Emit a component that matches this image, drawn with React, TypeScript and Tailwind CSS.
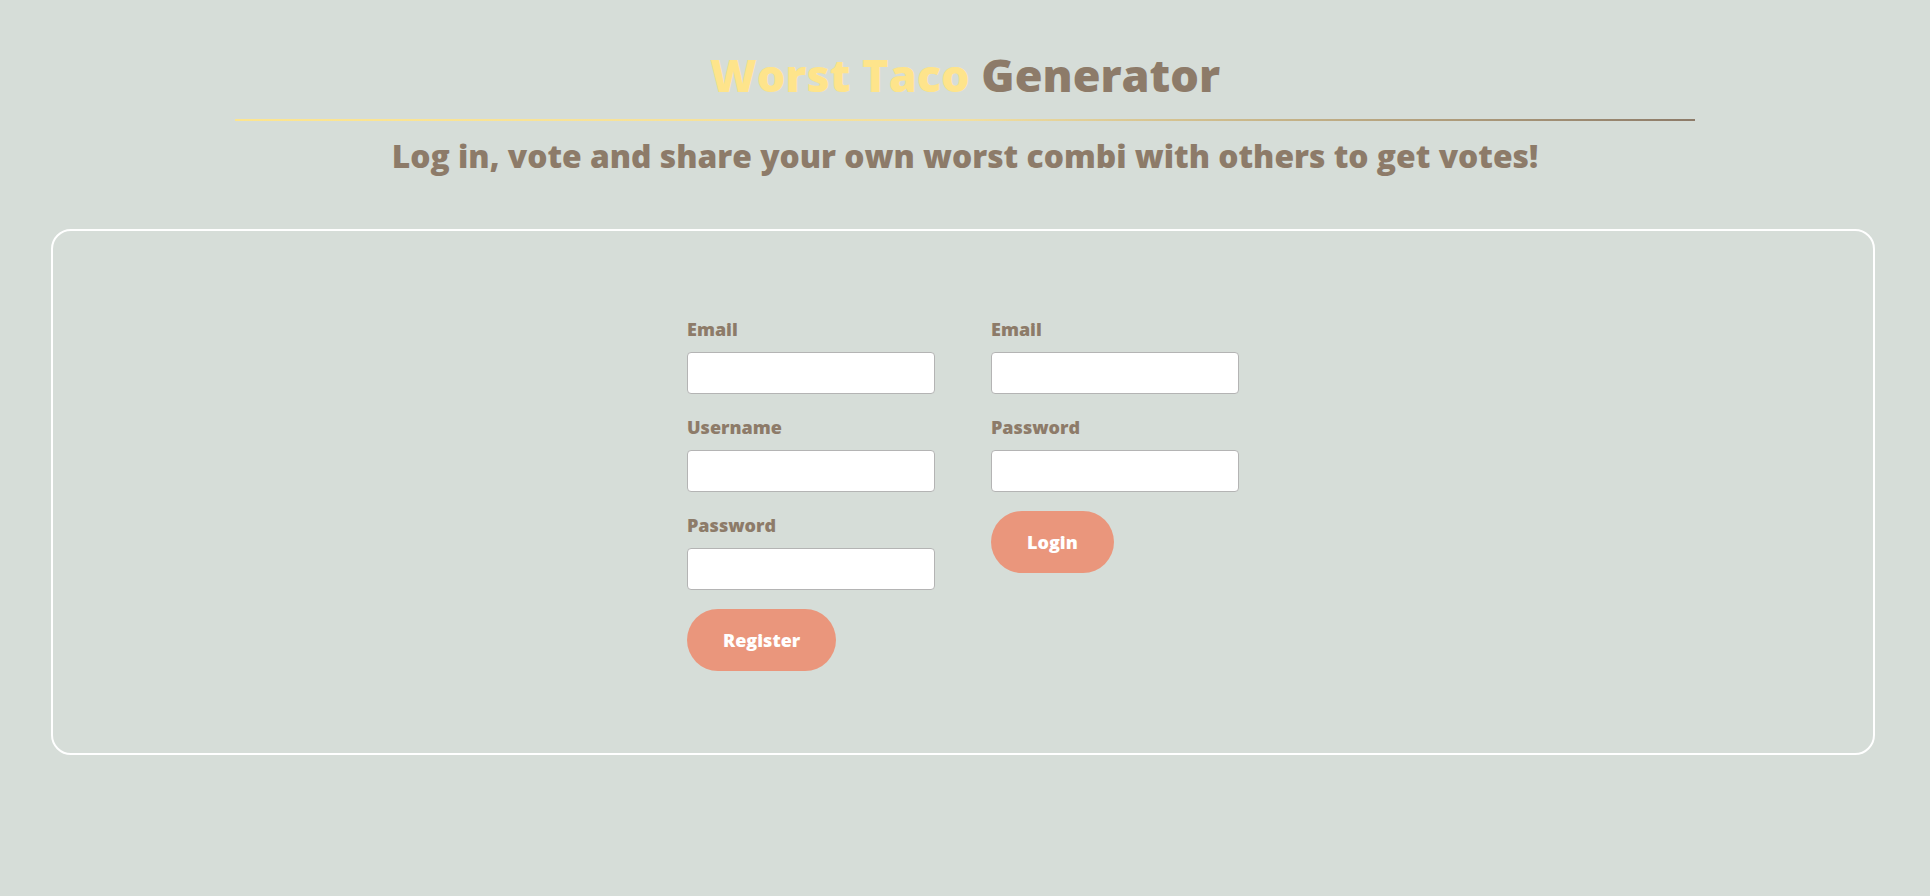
import React from "react";

const fieldLabel = "block text-[18px] leading-[28px] font-extrabold text-[#8d7b69] mb-[9px]";
const fieldInput = "block w-[248px] h-[42px] bg-white border border-[#b4b4b4] rounded-[4px] px-2 outline-none";

function Field({ label, type }: { label: string; type: string }) {
  return (
    <div className="mb-[19px]">
      <label className={fieldLabel}>{label}</label>
      <input type={type} className={fieldInput} />
    </div>
  );
}

function PillButton({ children }: { children: React.ReactNode }) {
  return (
    <button className="h-[62px] px-[36px] rounded-full bg-[#ea967c] text-white text-[18px] font-extrabold">
      {children}
    </button>
  );
}

export default function App() {
  return (
    <div
      className="min-h-[896px] w-full bg-[#d6ddd8] pt-[52px] pb-10"
      style={{ fontFamily: "'Open Sans', 'Noto Sans', sans-serif" }}
    >
      {/* Header */}
      <h1 className="text-center text-[45px] leading-[46px] font-extrabold">
        <span className="text-[#fee48b]">Worst Taco</span>{" "}
        <span className="text-[#8d7b69]">Generator</span>
      </h1>
      <div className="mx-auto mt-[21px] h-[2px] w-[1460px] bg-linear-to-r from-[#fde58f] via-[#f3e0a0] via-50% to-[#8d7b69]" />
      <h2 className="mt-[19px] text-center text-[31.8px] leading-[32px] font-extrabold text-[#8d7b69]">
        Log in, vote and share your own worst combi with others to get votes!
      </h2>

      {/* Forms card */}
      <div className="mt-[57px] ml-[51px] mr-[55px] border-2 border-white rounded-[20px] pt-[84px] pb-[82px] pl-[634px]">
        <div className="flex items-start gap-[56px]">
          <form className="w-[248px]" onSubmit={(e) => e.preventDefault()}>
            <Field label="Email" type="email" />
            <Field label="Username" type="text" />
            <Field label="Password" type="password" />
            <PillButton>Register</PillButton>
          </form>
          <form className="w-[248px]" onSubmit={(e) => e.preventDefault()}>
            <Field label="Email" type="email" />
            <Field label="Password" type="password" />
            <PillButton>Login</PillButton>
          </form>
        </div>
      </div>
    </div>
  );
}
